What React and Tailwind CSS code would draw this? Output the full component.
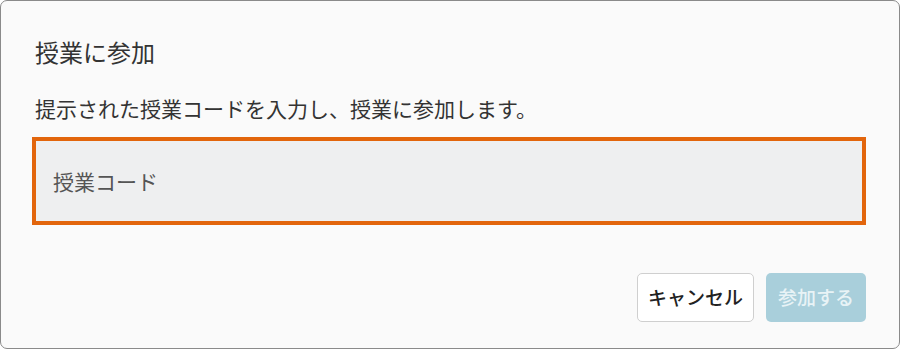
import React from "react";

const font = { fontFamily: '"Noto Sans CJK JP", "Noto Sans", sans-serif' };

const JoinClassDialog = () => {
  const [code, setCode] = React.useState("");

  return (
    <div
      className="box-border flex h-[349px] w-[900px] flex-col rounded-[7px] border border-[#8a8a8a] bg-[#fafafa] pl-[31px] pr-[33px] pt-[35px]"
      style={font}
    >
      <h2 className="ml-[3px] text-[24px] leading-[32px] text-[#333]">授業に参加</h2>
      <p className="ml-[3px] mt-[26px] text-[21px] leading-[28px] text-[#333]">
        提示された授業コードを入力し、授業に参加します。
      </p>
      <input
        type="text"
        value={code}
        onChange={(e) => setCode(e.target.value)}
        placeholder="授業コード"
        className="mt-[15px] box-border h-[88px] w-full border-4 border-[#e2650c] bg-[#eeeff0] px-[17px] text-[21px] text-[#333] placeholder:text-[#555] focus:outline-none"
      />
      <div className="mt-[48px] flex justify-end gap-[12px]">
        <button className="box-border h-[49px] w-[117px] rounded-[5px] border border-[#cfcfcf] bg-white text-[19px] font-medium text-[#222]">
          キャンセル
        </button>
        <button
          disabled
          className="box-border h-[49px] w-[100px] rounded-[5px] bg-[#a9cfdb] text-[19px] font-medium text-[#e8f3f6]"
        >
          参加する
        </button>
      </div>
    </div>
  );
};

export default function App() {
  return <JoinClassDialog />;
}
